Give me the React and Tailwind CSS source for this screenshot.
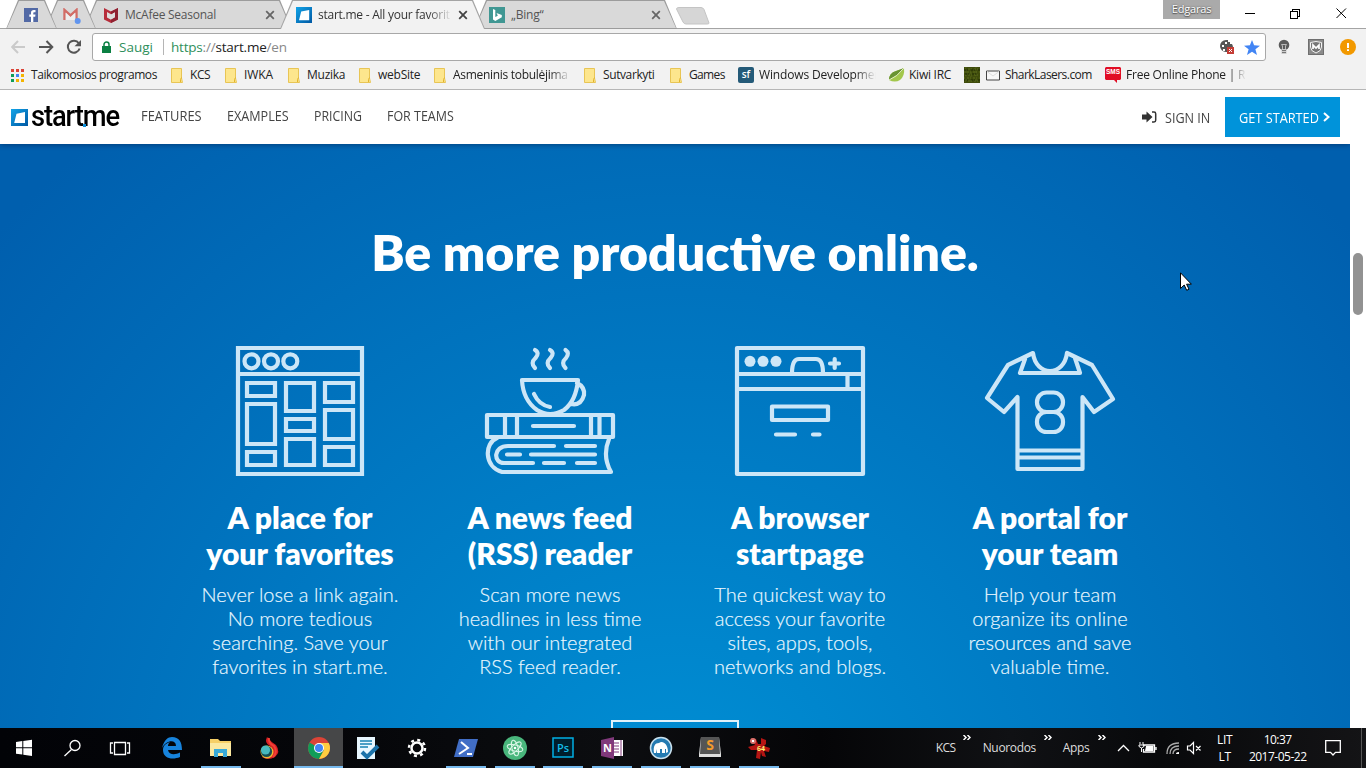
import React from "react";

const FADE = "[mask-image:linear-gradient(to_right,#000_82%,transparent)]";

function Tab({ width, active, order, children }) {
  const clip = "[clip-path:polygon(0_100%,12px_0,calc(100%_-_12px)_0,100%_100%)]";
  return (
    <div className={`relative h-7.25 shrink-0 ${width} ${order} ${clip} ${active ? "bg-[#a4a4a4]" : "bg-[#9c9c9c]"}`}>
      <div className={`absolute inset-x-px top-px ${active ? "bottom-0 bg-[#f2f2f2] text-[#333]" : "bottom-px bg-[#d9d9d9] text-[#555]"} ${clip} flex items-center`}>
        {children}
      </div>
    </div>
  );
}

function TabClose({ dark }) {
  return (
    <svg className="h-2.5 w-2.5 shrink-0" viewBox="0 0 10 10">
      <path d="M1.2 1.2L8.8 8.8M8.8 1.2L1.2 8.8" stroke={dark ? "#444" : "#666"} strokeWidth="1.8" />
    </svg>
  );
}

function StartLogo({ className }) {
  return (
    <svg className={className} viewBox="0 0 16 16" preserveAspectRatio="none">
      <defs>
        <linearGradient id="sq" x1="0" y1="0" x2="1" y2="1">
          <stop offset="0" stopColor="#12a4e8" />
          <stop offset="1" stopColor="#0058a3" />
        </linearGradient>
      </defs>
      <path fill="url(#sq)" d="M0 0H16V16H0Z" />
      <path fill="#fff" d="M5.2 4.4L13.2 2.9V13.2H3Z" />
    </svg>
  );
}

function Folder() {
  return (
    <svg className="mr-[7px] h-[15px] w-3 shrink-0" viewBox="0 0 12 15">
      <path d="M.5 .5H10.5V10L11.5 14.5H.5Z" fill="#fde68d" stroke="#e8c555" />
      <path d="M9.5 14V11.5L10.5 9.5" stroke="#e3b52e" fill="none" />
    </svg>
  );
}

const folders = [
  ["KCS", "w-[54px]", "tracking-[-0.4px]"],
  ["IWKA", "w-[63px]", "tracking-[-0.1px]"],
  ["Muzika", "w-[71px]", "tracking-[-0.25px]"],
  ["webSite", "w-[75px]", "tracking-[-0.25px]"],
  ["Asmeninis tobulėjima", "w-[150px]", "tracking-[-0.3px]"],
  ["Sutvarkyti", "w-[86px]", "tracking-[-0.4px]"],
  ["Games", "w-[68px]", "tracking-[-0.65px]"],
];

const dots = ["#db4437", "#db4437", "#db4437", "#0f9d58", "#4285f4", "#f4b400", "#0f9d58", "#f4b400", "#f4b400"];

function BrowserChrome() {
  return (
    <header className="h-[90px] shrink-0 font-['Open_Sans',sans-serif]">
      <div className="flex h-7.25 bg-white pl-1.5 text-[12px] [box-shadow:inset_0_-1px_#a4a4a4]">
        <Tab width="w-[51px]" order="z-30">
          <svg className="ml-[17px] h-[14px] w-[14px]" viewBox="0 0 14 14">
            <path fill="#5269a5" d="M0 0H14V14H0Z" />
            <path fill="#fff" d="M7 14V8.7H5.3V6.5H7V4.8C7 3 8 2 9.8 2H11.5V4.2H10.3C9.6 4.2 9.3 4.5 9.3 5.2V6.5H11.5L11.2 8.7H9.3V14Z" />
          </svg>
        </Tab>
        <Tab width="-ml-3 w-[51px]" order="z-20">
          <svg className="mt-0.5 ml-[17px] h-4 w-[18px]" viewBox="0 0 18 16">
            <path d="M1.5 12V2L7.5 7.5L13.5 2V12" fill="none" stroke="#d26c66" strokeWidth="2.4" />
            <path d="M2.7 12V4.5L7.5 9L12.3 4.5V12Z" fill="#eee" />
            <circle cx="14.7" cy="13" r="3" fill="#6195ee" />
          </svg>
        </Tab>
        <Tab width="-ml-3 w-[208px]" order="z-10">
          <svg className="ml-[19px] h-4 w-[14px]" viewBox="0 0 14 16">
            <path d="M0 1L7 4.5L14 1V12.5L7 16L0 12.5Z" fill="#b72d3b" />
            <path d="M3 5L7 7.2L11 5V10.6L7 12.8L3 10.6Z" fill="#ddd" />
            <path d="M7 4.5L14 1V12.5L7 16V12.8L11 10.6V5L7 7.2Z" fill="#8f2232" />
          </svg>
          <span className="ml-[7px] w-[140px] tracking-[-0.25px]">McAfee Seasonal</span>
          <TabClose />
        </Tab>
        <Tab width="-ml-3 w-[205px]" order="z-40" active>
          <StartLogo className="ml-[15px] h-4 w-4" />
          <span className={`ml-1.5 w-[134px] whitespace-nowrap tracking-[-0.25px] ${FADE}`}>start.me - All your favorit</span>
          <span className="ml-[6px] flex"><TabClose dark /></span>
        </Tab>
        <Tab width="-ml-[11px] w-[203px]" order="z-10">
          <svg className="ml-[14px] h-4 w-4" viewBox="0 0 16 16">
            <path fill="#409793" d="M0 0H16V16H0Z" />
            <path fill="#fff" d="M4 2L6.3 3V10L8.8 8.7L7.5 6L12.8 8V10.3L6.3 14L4 12.6Z" />
          </svg>
          <span className="ml-1.5 w-[140px] tracking-[-0.2px]">„Bing“</span>
          <TabClose />
        </Tab>
        <svg className="mt-[7px] -ml-[2px] h-[18px] w-9" viewBox="0 0 36 18">
          <path d="M4 .5H26Q28 .5 29 2.500L34 16Q34 17 32.500 17H11Q9 17 8 15L1.500 2Q1.500 .5 4 .5Z" fill="#d6d6d6" stroke="#c4c4c4" />
        </svg>
        <div className="ml-[452px] flex h-[19px] w-[57px] items-center justify-center bg-[#aaa] text-[11px] tracking-[-0.2px] text-white [text-shadow:0_0_2px_#555,0_1px_1px_#555]">Edgaras</div>
        <svg className="mt-[7px] ml-[25px] h-3 w-[104px]" viewBox="0 0 104 12" fill="none" stroke="#000" shapeRendering="crispEdges">
          <path d="M0 6.500H10M45.500 4.500H52.500V11.500H45.500ZM47.500 4V2.500H54.500V9.500H53" />
          <path d="M91.500 1.500L101 11M101 1.500L91.500 11" shapeRendering="auto" />
        </svg>
      </div>

      <div className="flex h-9 items-center bg-[#f2f2f2] pl-[11px]">
        <svg className="h-4 w-[72px]" viewBox="0 0 72 16" fill="none" strokeWidth="2">
          <path d="M14 8H1.500M7 2L1.200 8L7 14" stroke="#cacaca" />
          <path d="M28 8H41M35.500 2L41.300 8L35.500 14" stroke="#555" />
          <path d="M67.800 4.300A6 6 0 1 0 68.600 9.500" stroke="#555" />
          <path d="M70 1V7.200H63.500Z" fill="#555" />
        </svg>
        <div className="ml-[9px] flex h-7 w-[1174px] items-center rounded-[3px] border border-[#a8a8a8] bg-white text-[13.500px]">
          <svg className="ml-[9px] h-3 w-[9px]" viewBox="0 0 9 12">
            <path d="M0 5H9V12H0Z" fill="#0b8043" />
            <path d="M2 5.500V3.500A2.500 2.500 0 0 1 7 3.500V5.500" fill="none" stroke="#0b8043" strokeWidth="1.500" />
          </svg>
          <span className="ml-[8px] w-[44px] text-[#2f8f5b]">Saugi</span>
          <span className="h-4 w-px bg-[#b5b5b5]" />
          <span className="ml-[7px] w-[1048px] whitespace-nowrap tracking-[-0.2px] text-[#888]"><span className="text-[#2f8f5b]">https</span>://<span className="text-[#222]">start.me</span>/en</span>
          <svg className="h-4 w-4" viewBox="0 0 16 16">
            <path d="M7 1A6 6 0 1 0 7 13H8V8H14A7 7 0 0 0 13 5H11V3H9V1Z" fill="#555" />
            <path d="M3 6H5V8H3ZM6 3H8V5H6ZM4 10H6V12H4Z" fill="#fff" />
            <path d="M8 8H15V15H8Z" fill="#c43d36" />
            <path d="M10 10L13 13M13 10L10 13" stroke="#fff" />
          </svg>
          <svg className="ml-[9px] h-[15px] w-4" viewBox="0 0 16 15">
            <path d="M8 0L10.100 5.300L16 5.700L11.400 9.300L13 15L8 11.800L3 15L4.600 9.300L0 5.700L5.900 5.300Z" fill="#4285f4" />
          </svg>
        </div>
        <svg className="ml-[10px] h-4 w-4" viewBox="0 0 16 16">
          <circle cx="8" cy="6" r="5.300" fill="#5b5b5b" />
          <path d="M6.500 10V7L5.500 5.500H10.500L9.500 7V10" fill="none" stroke="#bbb" />
          <path d="M5.500 10H10.500V15H5.500Z" fill="#ccc" />
          <path d="M6 11.500H10M6 13.500H10" stroke="#777" />
        </svg>
        <svg className="ml-4 h-4 w-4" viewBox="0 0 16 16">
          <path d="M0 0H16V16H0Z" fill="#6f6f6f" />
          <path d="M1 1H15V15H1Z" fill="#8b8b8b" />
          <path d="M2.500 3.500Q8 1.500 13.500 3.500V8Q13.500 12 8 14Q2.500 12 2.500 8Z" fill="#777" stroke="#f4f4f4" />
          <path d="M5 10V6L8 9L11 6V10" stroke="#fff" strokeWidth="1.700" fill="none" />
        </svg>
        <svg className="ml-4 h-4 w-4" viewBox="0 0 16 16">
          <circle cx="8" cy="8" r="8" fill="#f29900" />
          <path d="M7 4H9V9H7ZM7 10.200H9V12H7Z" fill="#fff" />
        </svg>
      </div>

      <div className="flex h-[25px] items-center border-b border-[#b6b6b6] bg-[#f2f2f2] pb-[4px] pl-[11px] text-[12px] whitespace-nowrap text-[#222]">
        <div className="flex w-[160px] items-center">
          <svg className="mr-[7px] h-[13px] w-[13px] shrink-0" viewBox="0 0 13 13">
            {dots.map((c, i) => <rect key={i} x={(i % 3) * 5} y={Math.floor(i / 3) * 5} width="3" height="3" fill={c} />)}
          </svg>
          <span className="tracking-[-0.41px]">Taikomosios programos</span>
        </div>
        {folders.map(([name, w, tracking]) => (
          <div key={name} className={`flex shrink-0 items-center ${w}`}>
            <Folder />
            <span className={`${tracking} ${name.length > 12 ? `w-[118px] ${FADE}` : ""}`}>{name}</span>
          </div>
        ))}
        <div className="flex w-[150px] items-center">
          <span className="mr-[5px] flex h-4 w-4 items-center justify-center rounded-[2px] bg-[#245a78] pb-px text-[10px] font-semibold text-white">sf</span>
          <span className={`w-[117px] tracking-[-0.15px] ${FADE}`}>Windows Developmer</span>
        </div>
        <div className="flex w-[76px] items-center">
          <svg className="mr-1 h-4 w-[17px]" viewBox="0 0 17 16">
            <path d="M1 13Q1 6 8 4Q13 2.500 16 1Q17 9 12 13Q7 16 1 13Z" fill="#a3c74c" />
            <path d="M1 13Q1 6 8 4L16 1Q12 7 1 13Z" fill="#699333" />
            <path d="M1 13Q9 10 16 1" fill="none" stroke="#e6f0c8" />
          </svg>
          <span className="tracking-[-0.25px]">Kiwi IRC</span>
        </div>
        <div className="flex w-[141px] items-center">
          <svg className="h-4 w-4" viewBox="0 0 16 16">
            <path d="M0 0H16V16H0Z" fill="#3f4c0c" />
            <path d="M1 2H15M0 5H16M1 8H15M0 11H16M1 14H15" stroke="#5c6c1a" strokeDasharray="1 2 2 1" />
            <path d="M0 3H16M1 7H15M0 13H16" stroke="#202c05" strokeDasharray="2 1 1 3" />
            <path d="M2 0V16M7 1V15M12 0V16" stroke="#55651a" strokeDasharray="1 3 2 2" />
          </svg>
          <svg className="ml-1.5 h-[11px] w-[14px]" viewBox="0 0 14 11">
            <path d="M.5 1H13.500V10H.5Z" fill="#f7f7f7" stroke="#444" />
            <path d="M1 1.500L7 6L13 1.500" fill="none" stroke="#ddd" />
          </svg>
          <span className="ml-[5px] tracking-[-0.55px]">SharkLasers.com</span>
        </div>
        <div className="flex items-center">
          <svg className="mr-[5px] h-4 w-4" viewBox="0 0 16 16">
            <path d="M1 0H15L16 1V12L15 13H12V16L9 13H1L0 12V1Z" fill="#e10d25" />
            <text x="8" y="7" textAnchor="middle" fontSize="6.500" fontWeight="700" fontFamily="Liberation Sans, sans-serif" fill="#fff">SMS</text>
          </svg>
          <span className="w-[120px] tracking-[-0.22px] [mask-image:linear-gradient(to_right,#000_86%,transparent)]">Free Online Phone | R</span>
        </div>
      </div>
    </header>
  );
}

function SiteNav() {
  return (
    <nav className="relative z-10 flex h-[54px] w-[1350px] shrink-0 items-center bg-white pl-[11px] font-['Open_Sans',sans-serif] text-[14px] text-[#444] shadow-[0_1px_5px_rgba(0,20,60,0.45)]">
      <StartLogo className="h-[17px] w-[17px] shrink-0" />
      <div className="relative ml-[3px] h-8 w-[110px] shrink-0">
        <span className="inline-block origin-left scale-x-[0.91] font-['Roboto',sans-serif] text-[30px] leading-[30px] font-medium tracking-[-1.2px] text-black">startme</span>
        <span className="absolute top-[23px] left-[52px] h-[3px] w-[3px] bg-[#0c8fda]" />
      </div>
      <div className="mb-[3px] flex w-[1001px] shrink-0 whitespace-nowrap">
        <span className="w-[85.500px]"><span className="inline-block origin-left scale-x-[0.92]">FEATURES</span></span>
        <span className="w-[87px]"><span className="inline-block origin-left scale-x-[0.9]">EXAMPLES</span></span>
        <span className="w-[73.500px]"><span className="inline-block origin-left scale-x-[0.88]">PRICING</span></span>
        <span><span className="inline-block origin-left scale-x-[0.89]">FOR TEAMS</span></span>
      </div>
      <svg className="h-3 w-[15px] shrink-0" viewBox="0 0 15 12">
        <path d="M0 3.500H4.500V.5L10.500 6L4.500 11.500V8.500H0Z" fill="#333" />
        <path d="M10 1H12Q13.700 1 13.700 2.700V9.300Q13.700 11 12 11H10" fill="none" stroke="#333" strokeWidth="1.500" />
      </svg>
      <span className="ml-2 w-[60px] shrink-0 whitespace-nowrap"><span className="inline-block origin-left scale-x-[0.9]">SIGN IN</span></span>
      <button className="flex h-10 w-[115px] shrink-0 items-center bg-[#0093da] pl-3.5 text-white">
        <span className="w-[84px] whitespace-nowrap"><span className="inline-block origin-left scale-x-[0.91] font-medium">GET STARTED</span></span>
        <svg className="h-2.5 w-[7px]" viewBox="0 0 7 10"><path d="M1 1L5.500 5L1 9" fill="none" stroke="#fff" strokeWidth="2" /></svg>
      </button>
    </nav>
  );
}

function LineIcon({ children }) {
  return (
    <svg className="h-[150px] w-40" viewBox="0 0 160 150" fill="none" stroke="#cce6f7" strokeWidth="4.200" strokeLinecap="round" strokeLinejoin="round">
      {children}
    </svg>
  );
}

const features = [
  {
    title: ["A place for", "your favorites"],
    text: ["Never lose a link again.", "No more tedious", "searching. Save your", "favorites in start.me."],
    icon: (
      <g strokeLinejoin="miter">
        <path d="M18 13H142V139H18ZM18 39H142" />
        <circle cx="31.500" cy="26.300" r="7" /><circle cx="51" cy="26.300" r="7" /><circle cx="70.300" cy="26.300" r="7" />
        <path d="M27 48H55V61H27ZM27 69H55V109H27ZM27 117H55V130H27ZM66 48H94V76H66ZM66 84H94V96H66ZM66 104H94V130H66ZM105 48H133V67H105ZM105 75H133V104H105ZM105 112H133V130H105Z" />
      </g>
    ),
  },
  {
    title: ["A news feed", "(RSS) reader"],
    text: ["Scan more news", "headlines in less time", "with our integrated", "RSS feed reader."],
    icon: (
      <g>
        <path d="M65 15Q70 18 65.500 23Q60 28 65 33M80 15Q85 18 80.500 23Q75 28 80 33M95.500 15Q100 18 96 23Q90.500 28 95.500 33" />
        <path d="M52 45H108Q106 66 94 75Q80 83 67 75Q53 65 52 45ZM107 48Q115 52 114 60Q111 71 101 69M64 59Q69 70 80 72" />
        <path d="M17 80H143V102H17ZM35 80V102M47 80V102M121 80V102M129.500 80V102M63 91H104" />
        <path d="M27 103C14 108 14 132 32 137H141Q132 121 139 104M84 111H38C23 111 23 128 34 128H63M96 111H125M37 119.500H50M61 119.500H125M74 128H94M107 128H125" />
      </g>
    ),
  },
  {
    title: ["A browser", "startpage"],
    text: ["The quickest way to", "access your favorite", "sites, apps, tools,", "networks and blogs."],
    icon: (
      <g>
        <path d="M17 13H143V139H17ZM17 39H143M17 54H143M127.500 39V54" />
        <g fill="#cce6f7" stroke="none"><circle cx="30" cy="26.300" r="5.500" /><circle cx="43" cy="26.300" r="5.500" /><circle cx="56" cy="26.300" r="5.500" /></g>
        <path d="M72 38Q72 24 79 24H96Q103 24 103 38M114.700 24V33M110 28.500H119M52 71.500H108V85H52ZM56 99.500H75M93 99.500H99.500" />
      </g>
    ),
  },
  {
    title: ["A portal for", "your team"],
    text: ["Help your team", "organize its online", "resources and save", "valuable time."],
    icon: (
      <g>
        <path d="M63 18L38 30L17 63L34 77L47.500 62V134H112.500V62L124 77L143 64L122 30L97 18C94 42 66 42 63 18ZM55 24L50 38H110L105 23" />
        <path d="M48 115.500H112M48 122.500H112" />
        <rect x="67" y="57.500" width="26" height="19.500" rx="9.500" /><rect x="67" y="77" width="26" height="20" rx="9.500" />
      </g>
    ),
  },
];

function Hero() {
  return (
    <section className="flex h-[584px] w-[1350px] shrink-0 flex-col items-center bg-[radial-gradient(circle_900px_at_675px_680px,#0090d5,#005fae)] font-['Lato',sans-serif] text-white">
      <h1 className="mt-[78px] h-[61px] text-[50px] leading-[60px] font-extrabold whitespace-nowrap">Be more productive online.</h1>
      <div className="mt-[52px] grid w-[1000px] grid-cols-4">
        {features.map((f) => (
          <div key={f.title[0]} className="flex flex-col items-center text-center whitespace-nowrap">
            <LineIcon>{f.icon}</LineIcon>
            <h2 className="mt-[14px] text-[30px] leading-9 font-extrabold">{f.title[0]}<br />{f.title[1]}</h2>
            <p className="mt-[11px] text-[20px] leading-6 font-light text-[#eef8ff] [-webkit-text-stroke:0.2px_#dff1fc]">
              {f.text.map((line) => <span key={line} className="block">{line}</span>)}
            </p>
          </div>
        ))}
      </div>
      <div className="mt-[42px] h-2 w-32 shrink-0 border-2 border-b-0 border-[#e0f1fa]" />
    </section>
  );
}

const appIcons = [
  { name: "edge", bar: "", art: <path d="M1 11C3 3 7 0 11 0C18 0 21 5 21 13H7C8 18 14 18 19 15.500V20C12 23 2 22 2 13C2 8 6 6 9 5C7 7 7 8 7 9H15C15 2 5 3 1 11Z" fill="#1783dc" /> },
  { name: "explorer", bar: "bg-[#76b9ed]", art: <g><path d="M0 2H8L10 4H21V19H0Z" fill="#f6cf66" /><path d="M0 6H21V19H0Z" fill="#fbe8a0" /><path d="M4 12H17V20H13V16H8V20H4Z" fill="#38a9d8" /></g> },
  { name: "torch", bar: "", art: <g><path d="M8 0Q12 5 17 8Q22 15 16 20Q9 24 3 20L11 19Q16 15 11 9Q5 6 8 0Z" fill="#d91e23" /><path d="M10 1Q9 6 15 9Q19 15 14 20" stroke="#f04036" strokeWidth="2" fill="none" /><circle cx="8" cy="15" r="6.500" fill="#f1b833" /><circle cx="7.500" cy="14.500" r="5.600" fill="#174f53" /><circle cx="6.500" cy="13" r="4.600" fill="#48b9bd" /></g> },
  { name: "chrome", bar: "bg-[#76b9ed]", active: true, art: <g><circle cx="11" cy="11" r="11" fill="#db4437" /><path d="M11 11L1.500 5.500A11 11 0 0 0 11 22L16 13Z" fill="#0f9d58" /><path d="M11 6H20.800A11 11 0 0 1 11 22L16 13Z" fill="#ffcd40" /><circle cx="11" cy="11" r="5" fill="#fff" /><circle cx="11" cy="11" r="4" fill="#4285f4" /></g> },
  { name: "tasks", bar: "", art: <g><path d="M0 0H18V22H0Z" fill="#e8f7ff" /><path d="M3 4H15M3 7H15M3 10H11" stroke="#1683b4" strokeWidth="1.500" /><path d="M5 15L10 20L21 9" stroke="#1b73aa" strokeWidth="4" fill="none" /></g> },
  { name: "settings", bar: "", art: <g fill="none" stroke="#fff"><circle cx="11" cy="11" r="5.500" strokeWidth="2.500" /><circle cx="11" cy="11" r="8" strokeWidth="2.500" strokeDasharray="3 3.283" /></g> },
  { name: "powershell", bar: "bg-[#76b9ed]", art: <g><path d="M4 2H23L18 20H-1Z" fill="#416ec6" /><path d="M6 5L13 11L4 17M12 17H17" stroke="#fff" strokeWidth="2" fill="none" /></g> },
  { name: "atom", bar: "bg-[#76b9ed]", art: <g><circle cx="11" cy="11" r="12" fill="#49b67c" /><g fill="none" stroke="#d8f5e5" strokeWidth="1"><ellipse cx="11" cy="11" rx="8" ry="3" transform="rotate(15 11 11)" /><ellipse cx="11" cy="11" rx="8" ry="3" transform="rotate(75 11 11)" /><ellipse cx="11" cy="11" rx="8" ry="3" transform="rotate(135 11 11)" /></g><circle cx="11" cy="11" r="1.300" fill="#fff" /></g> },
  { name: "photoshop", bar: "bg-[#76b9ed]", art: <g><path d="M1 1H21V20H1Z" fill="#001e2c" stroke="#00aee4" strokeWidth="1.500" /><text x="11" y="14.500" textAnchor="middle" fontSize="11" fontWeight="600" fontFamily="Open Sans, sans-serif" fill="#13bde9">Ps</text></g> },
  { name: "onenote", bar: "bg-[#76b9ed]", art: <g><path d="M11 3H22V19H11Z" fill="#fff" /><path d="M13 6H18M13 9H18M13 12H18M13 15H18M20 3V19" stroke="#80397b" /><path d="M0 3L13 0V22L0 19Z" fill="#80397b" /><text x="6.500" y="15" textAnchor="middle" fontSize="11" fontWeight="700" fontFamily="Open Sans, sans-serif" fill="#fff">N</text></g> },
  { name: "mamp", bar: "bg-[#76b9ed]", art: <g><circle cx="11" cy="11" r="10.500" fill="#247ab1" stroke="#c9e0ed" strokeWidth="1.500" /><path d="M4 16C3 9 5 6 9 6C12 3 18 6 18 15L16 16V12H15V16H12V12H10V16H7V12L6 16Z" fill="#fff" /></g> },
  { name: "sublime", bar: "bg-[#76b9ed]", art: <g><path d="M2 0H20L22 17V20H0V17Z" fill="#dedede" /><path d="M2 0H20L21 17H1Z" fill="#555" /><text x="11" y="13" textAnchor="middle" fontSize="14" fontWeight="700" fontFamily="Open Sans, sans-serif" fill="#f49a2b">S</text></g> },
  { name: "debugger", bar: "bg-[#76b9ed]", art: <g><path d="M3 1L8 2L10 7H13V1L18 3V7L16 9L22 11L21 15L16 14L18 20L14 19L13 15L12 22L8 21L9 13L3 13L0 10L7 8Z" fill="#b51513" /><circle cx="5" cy="4" r="3" fill="#d77470" /><path d="M4 3H6V5H4Z" fill="#fff" /><text x="13" y="14" textAnchor="middle" fontSize="7" fontWeight="700" fontFamily="Open Sans, sans-serif" fill="#fff074">64</text></g> },
];

function Chevrons() {
  return (
    <svg className="mb-[21px] h-[5px] w-2 shrink-0" viewBox="0 0 8 5"><path d="M.5 0L3 2.500L.5 5M4.500 0L7 2.500L4.500 5" fill="none" stroke="#fff" strokeWidth="1.500" /></svg>
  );
}

function Taskbar() {
  return (
    <footer className="flex h-10 w-full shrink-0 items-center bg-[linear-gradient(90deg,#020307_0,#050609_24%,#0c0d10_45%,#050507_60%,#101114_74%,#08090b_85%,#141416_100%)] font-['Open_Sans',sans-serif] text-[12px] text-white">
      <svg className="h-5 w-[147.500px] shrink-0" viewBox="0 0 147.500 20" fill="none" stroke="#fff" strokeWidth="1.300">
        <path d="M16 4L22.300 3V9.300H16ZM23.300 2.900L32 1.700V9.300H23.300ZM16 10.300H22.300V16.600L16 15.700ZM23.300 10.300H32V18L23.300 16.800Z" fill="#fff" stroke="none" />
        <circle cx="75" cy="7.500" r="5" /><path d="M71.500 11.500L64.500 18" />
        <path d="M114.500 4.500V16.500H125.500V4.500ZM113 5H110.500V15H113M127 5H129.500V15H127" />
      </svg>
      <div className="flex h-10 shrink-0">
        {appIcons.map((a) => (
          <div key={a.name} className={`flex h-10 w-[48.950px] flex-col items-center ${a.active ? "bg-[#464748]" : ""}`}>
            <svg className="mt-[9px] h-[22px] w-[22px] overflow-visible" viewBox="0 0 22 22">{a.art}</svg>
            <span className={`mt-[7px] h-0.5 ${a.active ? "w-full" : "w-10"} ${a.bar}`} />
          </div>
        ))}
      </div>
      <div className="ml-[152px] flex h-10 shrink-0 items-center whitespace-nowrap">
        <span className="w-[27px] tracking-[-0.5px] text-[#ddd]">KCS</span>
        <Chevrons />
        <span className="ml-[12px] w-[61px] tracking-[-0.35px] text-[#ddd]">Nuorodos</span>
        <Chevrons />
        <span className="ml-[11px] w-[35px] tracking-[-0.35px] text-[#ddd]">Apps</span>
        <Chevrons />
        <svg className="ml-[11px] h-4 w-[86px]" viewBox="0 0 86 16" fill="none" stroke="#fff" strokeWidth="1.300">
          <path d="M1 11L6.500 5.500L12 11" />
          <path d="M26 5H37.500V12H26.500V9M39 7V10" />
          <path d="M23 2V4.500M26 2V4.500M22 5H27V6.500Q24.500 9.500 22 6.500ZM24.500 8V12" strokeWidth="1" />
          <path d="M29 6H36.500V11H28Z" fill="#fff" stroke="none" />
          <g stroke="#aaa"><path d="M50 14Q50 3 62 3M53 14Q53 6 62 6M56 14Q56 9 62 9" /></g><path d="M59 14Q59 12 62 12V14Z" fill="#fff" stroke="none" />
          <path d="M70.500 6H73L76.500 2.500V13.500L73 10H70.500ZM79 6L83.500 10.500M83.500 6L79 10.500" strokeWidth="1.200" />
        </svg>
      </div>
      <div className="ml-[10px] flex w-6 flex-col items-center leading-[17px] tracking-[-0.2px]"><span>LIT</span><span>LT</span></div>
      <div className="ml-[7px] flex w-[68px] flex-col items-center leading-[17px] tracking-[-0.5px]"><span>10:37</span><span className="whitespace-nowrap">2017-05-22</span></div>
      <svg className="ml-[13px] h-4 w-4 shrink-0" viewBox="0 0 16 16"><path d="M.7 .7H15.300V12.300H10.500L8 15L5.500 12.300H.7Z" fill="none" stroke="#fff" strokeWidth="1.300" /></svg>
      <span className="ml-5 h-10 w-px bg-[#555]" />
    </footer>
  );
}

export default function App() {
  return (
    <div className="relative flex h-[768px] w-[1366px] flex-col overflow-hidden bg-white">
      <BrowserChrome />
      <div className="flex h-[638px] shrink-0 overflow-hidden">
        <main className="flex w-[1350px] shrink-0 flex-col overflow-hidden">
          <SiteNav />
          <Hero />
        </main>
        <aside className="flex w-4 shrink-0 justify-center bg-white pt-[163px]">
          <span className="h-[62px] w-2.5 rounded-full bg-[#929292]" />
        </aside>
      </div>
      <Taskbar />
      <svg className="absolute top-[272px] left-[1180px] h-[19px] w-3" viewBox="0 0 12 19">
        <path d="M.5 .8V16.500L4.200 13L6.700 18.300L9 17.200L6.600 12.200H11.400Z" fill="#fff" stroke="#000" />
      </svg>
    </div>
  );
}
